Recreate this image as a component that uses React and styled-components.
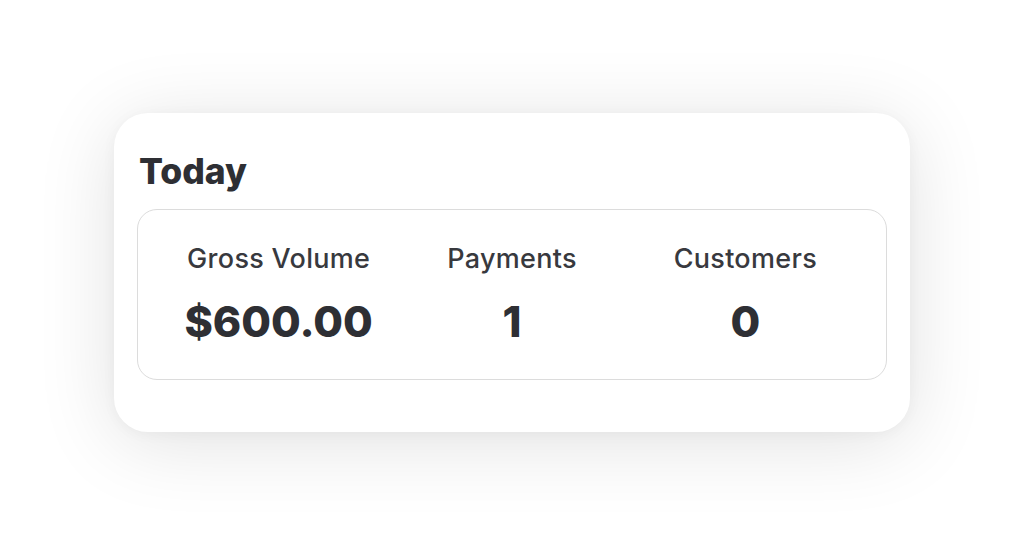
import React from "react";
import styled, { createGlobalStyle } from "styled-components";

const Global = createGlobalStyle`
  html, body { margin: 0; padding: 0; background: #ffffff; }
  body { font-family: Inter, "Noto Sans", "Liberation Sans", sans-serif; -webkit-font-smoothing: antialiased; }
`;

const Page = styled.div`
  width: 1024px;
  height: 545px;
  box-sizing: border-box;
  padding: 113px 114px 0 114px;
  background: #ffffff;
`;

const Card = styled.section`
  box-sizing: border-box;
  width: 796px;
  height: 319px;
  background: #ffffff;
  border-radius: 34px;
  box-shadow: 0 10px 80px rgba(0, 0, 0, 0.12), 0 2px 14px rgba(0, 0, 0, 0.04);
  padding: 37px 23px 0 23px;
`;

const Title = styled.h2`
  margin: 0 0 0 2px;
  font-size: 35.5px;
  line-height: 44px;
  font-weight: 800;
  color: #2e2f34;
  letter-spacing: 0;
`;

const StatsBox = styled.div`
  margin-top: 15px;
  box-sizing: border-box;
  height: 171px;
  border: 1.5px solid #dcdcdc;
  border-radius: 20px;
  display: grid;
  grid-template-columns: repeat(3, 1fr);
  padding: 0 24px;
  align-content: center;
`;

const Stat = styled.div`
  display: flex;
  flex-direction: column;
  align-items: center;
  gap: 21px;
`;

const Label = styled.div`
  font-size: 27px;
  line-height: 32px;
  font-weight: 500;
  color: #38393e;
  letter-spacing: 0.3px;
`;

const Value = styled.div`
  font-size: 43px;
  line-height: 50px;
  font-weight: 800;
  color: #2e2f34;
`;

const stats = [
  { label: "Gross Volume", value: "$600.00" },
  { label: "Payments", value: "1" },
  { label: "Customers", value: "0" },
];

export default function App() {
  return (
    <>
      <Global />
      <Page>
        <Card>
          <Title>Today</Title>
          <StatsBox>
            {stats.map((s) => (
              <Stat key={s.label}>
                <Label>{s.label}</Label>
                <Value>{s.value}</Value>
              </Stat>
            ))}
          </StatsBox>
        </Card>
      </Page>
    </>
  );
}
